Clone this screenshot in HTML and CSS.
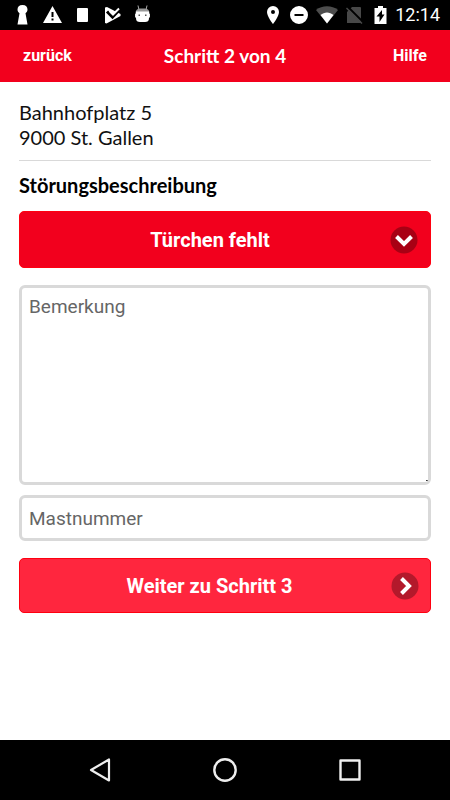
FILE: index.html
```html
<!DOCTYPE html>
<html lang="de">
<head>
<meta charset="utf-8">
<meta name="viewport" content="width=device-width, initial-scale=1">
<title>Schritt 2 von 4</title>
<link rel="stylesheet" href="styles.css">
</head>
<body>
<div class="status">
  <div class="status-left">
    <svg width="20" height="20" viewBox="0 0 20 20" fill="#fff" aria-hidden="true"><path d="M10.500 0c3.400 0 5 2 5 4.500 0 1.800-.9 3-2 3.800L15.500 19.500h-10L7.500 8.300c-1.100-.8-2-2-2-3.800C5.500 2 7.200 0 10.500 0z"/></svg>
    <svg width="20" height="20" viewBox="0 0 20 20" fill="#fff" aria-hidden="true"><path fill-rule="evenodd" d="M10.500 1L20 18H1zM9.500 7v5h2V7zm0 6.500v2h2v-2z"/></svg>
    <svg width="20" height="20" viewBox="0 0 20 20" fill="#fff" aria-hidden="true"><rect x="5" y="3" width="11" height="14" rx="1"/></svg>
    <svg width="20" height="20" viewBox="0 0 20 20" aria-hidden="true"><path fill="#fff" d="M3 2.500L5 2l13.500 7v2L4.500 18.500 3 18z"/><path fill="none" stroke="#000" stroke-width="3" d="M5 6.500l5.500 5.500L19 3"/><path fill="none" stroke="#fff" stroke-width="2" d="M7.500 6l3.500 3.500L17 3.500"/></svg>
    <svg width="20" height="20" viewBox="0 0 20 20" aria-hidden="true"><path fill="none" stroke="#aaa" d="M6 .5l1 4.500M15 .5L14 5"/><path fill="#999" d="M3.500 8c0-3 2-4.500 4.500-4.500h5c2.500 0 4.500 1.500 4.500 4.500z"/><path fill="#fff" d="M4 6.500h13V13c0 3-1.500 4-4 4H8c-2.500 0-4-1-4-4z"/><path fill="#e8e8e8" d="M3 8.500h1v4H3zM17 8.500h1v4h-1z"/><path fill="#555" d="M6.500 9.500H8V11H6.500zM13 9.500h1.500V11H13z"/></svg>
  </div>
  <div class="status-right">
    <svg width="24" height="20" viewBox="0 0 24 20" fill="#fff" aria-hidden="true"><path fill-rule="evenodd" d="M12 1a6 6 0 0 1 6 6c0 4.500-6 12-6 12S6 11.500 6 7a6 6 0 0 1 6-6zm0 4a2 2 0 1 0 0 4 2 2 0 0 0 0-4z"/></svg>
    <svg width="24" height="20" viewBox="0 0 24 20" fill="#fff" aria-hidden="true"><path fill-rule="evenodd" d="M11 1a9 9 0 1 1 0 18 9 9 0 0 1 0-18zM6.500 9v2h9V9z"/></svg>
    <svg width="24" height="20" viewBox="0 0 24 20" aria-hidden="true"><path fill="#4d4d4d" d="M1 5c6-5 16-5 22 0L12 18.500z"/><path fill="#fff" d="M5.500 10c4-3.500 9-3.500 13 0L12 18.500z"/></svg>
    <svg width="24" height="20" viewBox="0 0 24 20" aria-hidden="true"><path fill="#484848" d="M10 2h8q1 0 1 1v15H5V7z"/><path stroke="#000" stroke-width="2" d="M5.500 1.500L21 17"/><path stroke="#484848" stroke-width="1.500" d="M4.500 3L20 18.500"/></svg>
    <svg width="24" height="20" viewBox="0 0 24 20" fill="#fff" aria-hidden="true"><path fill-rule="evenodd" d="M9 1h5v2h3.500v16h-12V3H9zM13 5L7.500 11.500h3V17L15.500 9.500h-2.500z"/></svg>
    <time class="clock">12:14</time>
  </div>
</div>
<header class="bar">
  <a class="bar-link" href="#">zurück</a>
  <h1 class="bar-title">Schritt 2 von 4</h1>
  <a class="bar-link bar-end" href="#">Hilfe</a>
</header>
<main class="content">
  <address class="address">Bahnhofplatz 5<br>9000 St. Gallen</address>
  <form class="form">
    <label class="heading" for="fault">Störungsbeschreibung</label>
    <div class="select-wrap">
      <select class="select" id="fault"><option>Türchen fehlt</option></select>
      <svg class="select-icon" width="28" height="28" viewBox="0 0 28 28" aria-hidden="true"><circle cx="14" cy="14" r="13.500" fill="#a80014"/><path d="M6.500 10.500l7.500 7.500 7.500-7.500" fill="none" stroke="#fff" stroke-width="4"/></svg>
    </div>
    <textarea class="field note" aria-label="Bemerkung" placeholder="Bemerkung"></textarea>
    <input class="field mast" type="text" aria-label="Mastnummer" placeholder="Mastnummer">
    <button class="next" type="button">
      <span class="next-text">Weiter zu Schritt 3</span>
      <svg width="28" height="28" viewBox="0 0 28 28" aria-hidden="true"><circle cx="14" cy="14" r="13.500" fill="#b3192b"/><path d="M10.500 6.500L18 14l-7.500 7.500" fill="none" stroke="#fff" stroke-width="4"/></svg>
    </button>
  </form>
</main>
<nav class="nav">
  <button class="nav-button" type="button" aria-label="Zurück"><svg width="26" height="26" viewBox="0 0 26 26" fill="none" stroke="#eee" stroke-width="2.200" stroke-linejoin="round"><path d="M22 2.500v21L4 13z"/></svg></button>
  <button class="nav-button" type="button" aria-label="Startseite"><svg width="26" height="26" viewBox="0 0 26 26" fill="none" stroke="#eee" stroke-width="2.400"><circle cx="13" cy="13" r="10.700"/></svg></button>
  <button class="nav-button" type="button" aria-label="Übersicht"><svg width="26" height="26" viewBox="0 0 26 26" fill="none" stroke="#eee" stroke-width="2.400" stroke-linejoin="round"><path d="M3.500 3.500h19v19h-19z"/></svg></button>
</nav>
</body>
</html>
```
FILE: styles.css
```css
* { box-sizing: border-box; }
body {
  margin: 0;
  min-height: 100vh;
  display: flex;
  flex-direction: column;
  background: #fff;
  color: #111;
  font-family: Lato, sans-serif;
}
svg { display: block; flex: none; }

.status {
  height: 30px;
  padding: 0 10px 0 12px;
  display: flex;
  align-items: center;
  justify-content: space-between;
  background: #000;
}
.status-left { display: flex; gap: 10px; }
.status-right { display: flex; align-items: center; gap: 3px; }
.clock {
  margin-left: -1px;
  color: #fff;
  font: 400 18px/20px Roboto, sans-serif;
}

.bar {
  height: 52px;
  padding: 0 23px;
  display: grid;
  grid-template-columns: 1fr auto 1fr;
  align-items: center;
  background: #f2001d;
  color: #fff;
}
.bar-link {
  color: #fff;
  font: 700 16px/20px Roboto, sans-serif;
  text-decoration: none;
}
.bar-end { text-align: right; }
.bar-title { margin: 0; font-size: 19px; line-height: 24px; font-weight: 700; }

.content { flex: 1; padding: 18px 19px; }
.address {
  padding-bottom: 10px;
  border-bottom: 1px solid #d9d9d9;
  font-size: 20px;
  line-height: 25px;
  font-style: normal;
}
.form { display: flex; flex-direction: column; }
.heading {
  margin: 12px 0 14px;
  color: #000;
  font-size: 20px;
  line-height: 24px;
  font-weight: 700;
}
.select-wrap { position: relative; margin-bottom: 17px; }
.select,
.next {
  width: 100%;
  border: 1px solid #ff0010;
  border-radius: 5px;
  color: #fff;
  font: 700 20px/24px Roboto, sans-serif;
}
.select {
  display: block;
  height: 57px;
  padding: 0 30px 0 0;
  appearance: none;
  background: #f2001d;
  text-align: center;
  text-align-last: center;
}
.select-icon { position: absolute; right: 13px; top: 15px; pointer-events: none; }
.field {
  display: block;
  width: 100%;
  padding: 7px;
  border: 3px solid #d9d9d9;
  border-radius: 6px;
  background: #fff;
  color: #111;
  font: 400 19px/24px Roboto, sans-serif;
}
.field::placeholder { color: #666; }
.note {
  height: 200px;
  margin-bottom: 10px;
  resize: none;
  background: linear-gradient(#333, #333) right bottom 1px / 2px 1px no-repeat #fff;
}
.mast { height: 46px; margin-bottom: 17px; }
.next {
  height: 55px;
  padding: 0 11px 0 8px;
  display: flex;
  align-items: center;
  background: #ff263e;
}
.next-text { flex: 1; }

.nav {
  height: 60px;
  padding: 0 38px;
  display: flex;
  background: #000;
}
.nav-button {
  flex: 1;
  padding: 0;
  border: 0;
  background: none;
  display: flex;
  align-items: center;
  justify-content: center;
}
```
